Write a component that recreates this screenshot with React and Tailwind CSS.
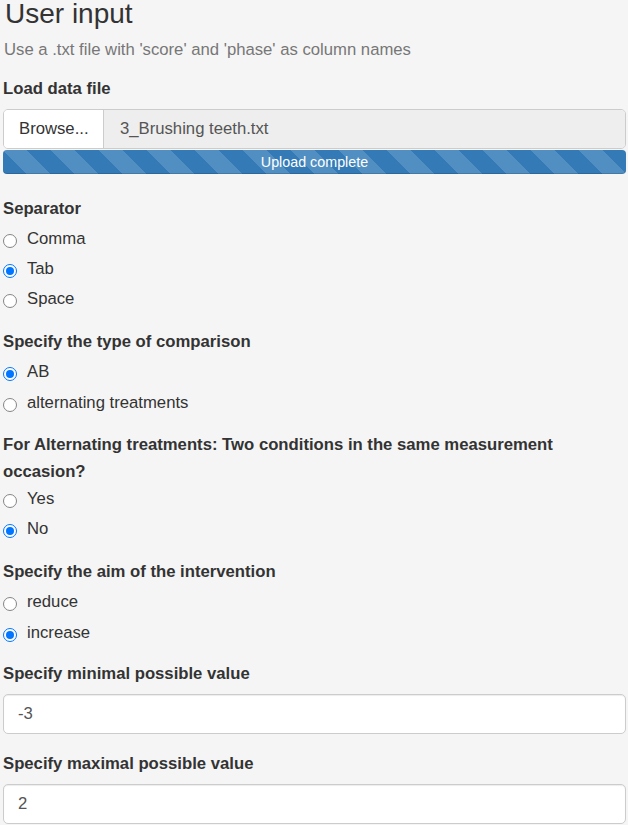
import React from "react";

function Radio({ label, checked }) {
  return (
    <div className="flex h-[24px] items-start gap-[10px]">
      {checked ? (
        <span className="mt-[7px] flex h-[14px] w-[14px] shrink-0 items-center justify-center rounded-full border-[1.5px] border-[#0075ff] bg-white">
          <span className="h-[8px] w-[8px] rounded-full bg-[#0075ff]" />
        </span>
      ) : (
        <span className="mt-[7px] h-[14px] w-[14px] shrink-0 rounded-full border border-[#858585] bg-white" />
      )}
      <span className="text-[16.7px] leading-[24px]">{label}</span>
    </div>
  );
}

function RadioGroup({ options, value, gap = "gap-[6px]" }) {
  return (
    <div className={`mt-[6px] flex flex-col ${gap}`}>
      {options.map((o) => (
        <Radio key={o} label={o} checked={o === value} />
      ))}
    </div>
  );
}

function Label({ children, className = "" }) {
  return (
    <label className={`block text-[16.7px] font-bold leading-[24px] ${className}`}>
      {children}
    </label>
  );
}

function NumberBox({ value }) {
  return (
    <div className="mt-[8px] flex h-[40px] items-center rounded-[5px] border border-[#cccccc] bg-white px-[14px] text-[16.7px] text-[#555] shadow-[inset_0_1px_1px_rgba(0,0,0,0.075)]">
      {value}
    </div>
  );
}

export default function App() {
  return (
    <div className="h-[825px] overflow-hidden bg-[#f5f5f5] pl-[3px] pr-[2px] font-['Liberation_Sans',Arial,sans-serif] text-[#333]">
      <h3 className="pl-[2px] text-[28px] leading-[28px]">User input</h3>
      <p className="mt-[10px] pl-[1px] text-[16.7px] leading-[24px] text-[#777]">
        Use a .txt file with 'score' and 'phase' as column names
      </p>

      <Label className="mt-[15px]">Load data file</Label>
      <div className="mt-[8px] flex h-[40px] overflow-hidden rounded-[5px] border border-[#cccccc] text-[16.7px]">
        <div className="flex w-[100px] items-center border-r border-[#cccccc] bg-white pl-[15px]">
          Browse...
        </div>
        <div className="flex flex-1 items-center bg-[#eeeeee] pl-[16px] text-[#555]">
          3_Brushing teeth.txt
        </div>
      </div>
      <div className="mt-[1px] h-[24px] rounded-[4px] bg-[#337ab7] bg-[linear-gradient(45deg,rgba(255,255,255,.15)_25%,transparent_25%,transparent_50%,rgba(255,255,255,.15)_50%,rgba(255,255,255,.15)_75%,transparent_75%,transparent)] bg-[length:48px_48px] text-center text-[14.3px] leading-[24px] text-white shadow-[inset_0_-1px_0_rgba(0,0,0,0.15)]">
        Upload complete
      </div>

      <Label className="mt-[23px]">Separator</Label>
      <RadioGroup options={["Comma", "Tab", "Space"]} value="Tab" />

      <Label className="mt-[19px]">Specify the type of comparison</Label>
      <RadioGroup options={["AB", "alternating treatments"]} value="AB" gap="gap-[7px]" />

      <label className="mt-[18px] block text-[16.7px] font-bold leading-[24px]">
        <span className="block">For Alternating treatments: Two conditions in the same measurement</span>
        <span className="mt-[3px] block">occasion?</span>
      </label>
      <div className="-mt-[3px]">
        <RadioGroup options={["Yes", "No"]} value="No" />
      </div>

      <Label className="mt-[19px]">Specify the aim of the intervention</Label>
      <RadioGroup options={["reduce", "increase"]} value="increase" gap="gap-[7px]" />

      <Label className="mt-[17px]">Specify minimal possible value</Label>
      <NumberBox value="-3" />

      <Label className="mt-[18px]">Specify maximal possible value</Label>
      <NumberBox value="2" />
    </div>
  );
}
